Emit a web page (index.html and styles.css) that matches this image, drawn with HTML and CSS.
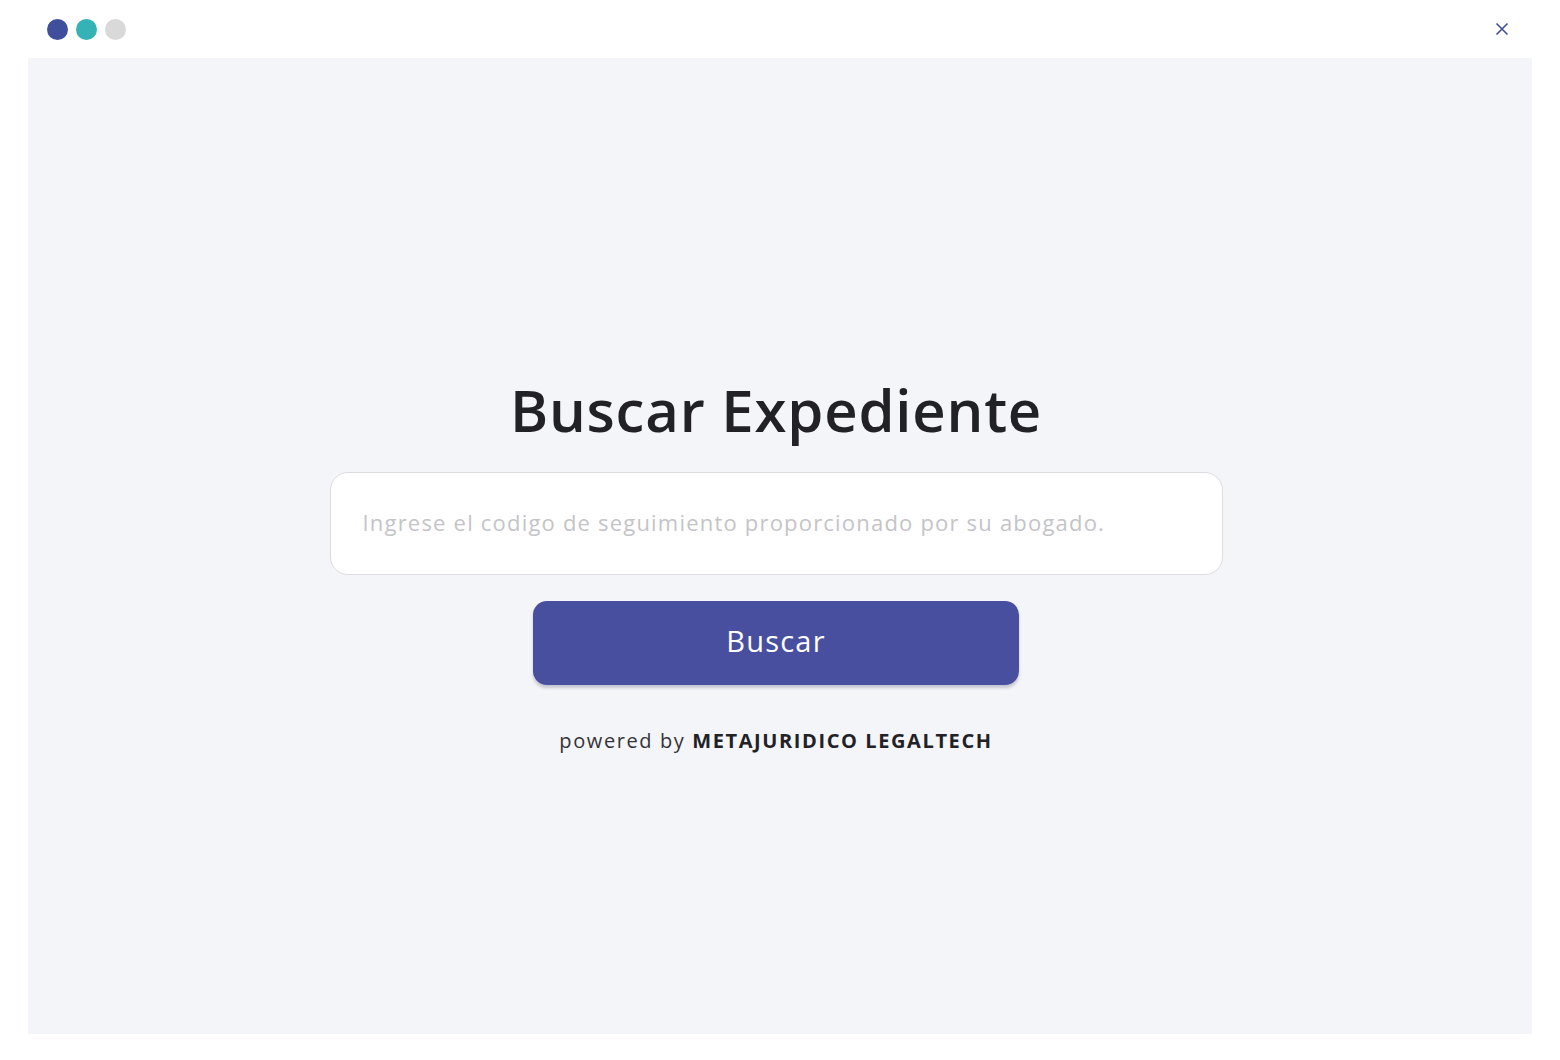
FILE: index.html
```html
<!DOCTYPE html>
<html lang="es">
<head>
<meta charset="utf-8">
<title>Buscar Expediente</title>
<link rel="stylesheet" href="styles.css">
</head>
<body>
  <div class="window">
    <header class="titlebar">
      <div class="dots">
        <span class="dot dot-blue"></span>
        <span class="dot dot-teal"></span>
        <span class="dot dot-gray"></span>
      </div>
      <button class="close" type="button" aria-label="Cerrar">
        <svg width="14" height="14" viewBox="0 0 14 14"><path d="M1.5 1.5 L12.5 12.5 M12.5 1.5 L1.5 12.5" stroke="#3f4f9b" stroke-width="1.6" fill="none"/></svg>
      </button>
    </header>
    <main class="panel">
      <div class="search">
        <h1 class="title">Buscar Expediente</h1>
        <input class="code-input" type="text" placeholder="Ingrese el codigo de seguimiento proporcionado por su abogado.">
        <button class="btn" type="button">Buscar</button>
        <p class="powered">powered by <strong>METAJURIDICO LEGALTECH</strong></p>
      </div>
    </main>
  </div>
</body>
</html>
```

FILE: styles.css
```css
* { box-sizing: border-box; }

html, body {
  margin: 0;
  padding: 0;
  background: #ffffff;
  font-family: "Open Sans", "DejaVu Sans", sans-serif;
}

.window {
  width: 1560px;
  height: 1060px;
  display: flex;
  flex-direction: column;
  padding: 0 28px 26px;
}

.titlebar {
  height: 58px;
  display: flex;
  align-items: center;
  justify-content: space-between;
  padding: 0 23px 0 19px;
}

.dots {
  display: flex;
  gap: 8px;
}

.dot {
  width: 21px;
  height: 21px;
  border-radius: 50%;
  display: block;
}
.dot-blue { background: #3f4f9b; }
.dot-teal { background: #34b2b5; }
.dot-gray { background: #d9d9d9; }

.close {
  border: 0;
  background: none;
  padding: 0;
  width: 14px;
  height: 14px;
  display: flex;
  cursor: pointer;
}

/* content sits in the upper-middle of the grey panel */
.panel {
  flex: 1;
  background: #f4f5f9;
  display: flex;
  justify-content: center;
  align-items: flex-start;
  padding: 317px 8px 0 0;
}

.search {
  display: flex;
  flex-direction: column;
  align-items: center;
}

.title {
  margin: 0 0 27px;
  font-size: 58px;
  font-weight: 600;
  color: #222226;
  line-height: 70px;
  letter-spacing: 0.8px;
}

.code-input {
  width: 893px;
  height: 103px;
  border: 1px solid #dcdcde;
  border-radius: 18px;
  background: #ffffff;
  padding: 0 32px 4px;
  font-family: inherit;
  font-size: 22px;
  letter-spacing: 1.2px;
  color: #333;
  outline: none;
}
.code-input::placeholder {
  color: #c4c4c8;
}

.btn {
  margin-top: 26px;
  width: 486px;
  height: 84px;
  border: 0;
  border-radius: 14px;
  background: #484f9f;
  color: #ffffff;
  font-family: inherit;
  font-size: 29px;
  letter-spacing: 1.2px;
  padding: 0 0 5px;
  box-shadow: 0 3px 3px rgba(60, 60, 90, 0.25);
  cursor: pointer;
}

.powered {
  margin: 42px 0 0;
  font-size: 20px;
  color: #333338;
  letter-spacing: 1.6px;
}
.powered strong {
  font-weight: 700;
  color: #222226;
}
```
